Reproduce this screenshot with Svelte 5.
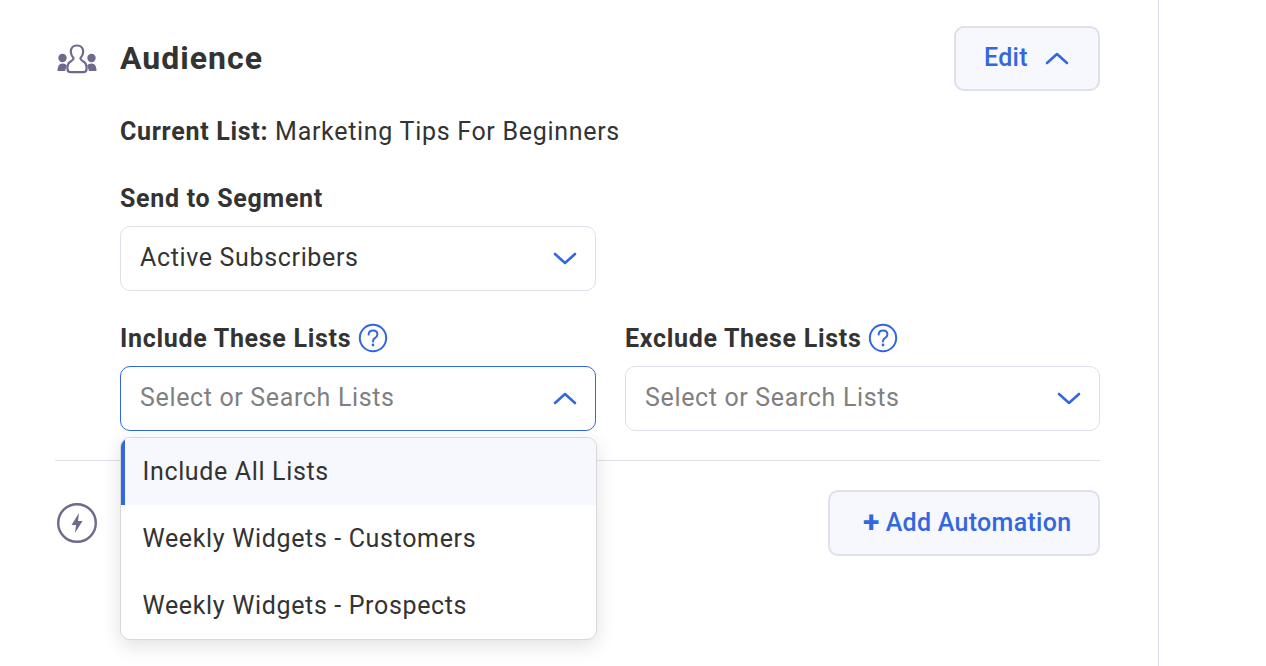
<script>
  const options = ["Include All Lists", "Weekly Widgets - Customers", "Weekly Widgets - Prospects"];
</script>

{#snippet chevron(up)}
  <svg class="chevron" width="24" height="14" viewBox="0 0 24 14" aria-hidden="true">
    <path d={up ? "M2 12 L12 3 L22 12" : "M2 3 L12 12 L22 3"} fill="none" stroke="#3367e0" stroke-width="2.6" stroke-linecap="round" stroke-linejoin="round" />
  </svg>
{/snippet}

{#snippet help()}
  <svg class="help" width="30" height="30" viewBox="0 0 30 30" aria-hidden="true">
    <circle cx="15" cy="15" r="13.2" fill="none" stroke="#3367e0" stroke-width="2" />
    <path d="M10.6 11.6 C10.8 8.9 12.7 7.6 15 7.6 C17.5 7.6 19.4 9.1 19.4 11.4 C19.4 13.3 18.2 14.2 16.8 15.2 C15.6 16 15 16.8 15 18.4" fill="none" stroke="#3367e0" stroke-width="2" stroke-linecap="round" />
    <circle cx="15" cy="22" r="1.4" fill="#3367e0" />
  </svg>
{/snippet}

<div class="page">
  <main class="panel">
    <section class="audience">
      <header class="section-head">
        <div class="section-title">
          <svg class="section-icon people" width="40" height="30" viewBox="0 0 40 30" aria-hidden="true">
            <g fill="#6d6a8d">
              <circle cx="5.5" cy="14" r="4.2" />
              <path d="M0.5 27 C0.5 22.5 2 19.5 5.5 19.5 C7.6 19.5 9 20.4 9.8 21.6 L8 27 Z" />
              <circle cx="34.5" cy="14" r="4.2" />
              <path d="M39.5 27 C39.5 22.5 38 19.5 34.5 19.5 C32.4 19.5 31 20.4 30.2 21.6 L32 27 Z" />
            </g>
            <path d="M20 1.5 C24 1.5 26.2 4.2 26.2 7.8 C26.2 10.6 24.6 12.8 23.4 14.2 C23.4 15.6 24.4 16.4 26 17.2 C28.2 18.3 29.6 20.5 29.6 24.5 C29.6 26.9 28.4 28.2 26.4 28.2 L13.6 28.2 C11.6 28.2 10.4 26.9 10.4 24.5 C10.4 20.5 11.8 18.3 14 17.2 C15.6 16.4 16.6 15.6 16.6 14.2 C15.4 12.8 13.8 10.6 13.8 7.8 C13.8 4.2 16 1.5 20 1.5 Z" fill="#fff" stroke="#6d6a8d" stroke-width="2.2" stroke-linejoin="round" />
          </svg>
          <h2>Audience</h2>
        </div>
        <button class="ghost edit">Edit {@render chevron(true)}</button>
      </header>

      <div class="section-body">
        <p class="current"><strong>Current List:</strong> Marketing Tips For Beginners</p>

        <div class="field segment">
          <span class="label">Send to Segment</span>
          <div class="select">
            <span>Active Subscribers</span>
            {@render chevron(false)}
          </div>
        </div>

        <div class="list-fields">
          <div class="field">
            <span class="label">Include These Lists {@render help()}</span>
            <div class="select open">
              <span class="placeholder">Select or Search Lists</span>
              {@render chevron(true)}
            </div>
            <ul class="menu">
              {#each options as option, i}
                <li class:active={i === 0}>{option}</li>
              {/each}
            </ul>
          </div>
          <div class="field">
            <span class="label">Exclude These Lists {@render help()}</span>
            <div class="select">
              <span class="placeholder">Select or Search Lists</span>
              {@render chevron(false)}
            </div>
          </div>
        </div>
      </div>
    </section>

    <section class="automation">
      <svg class="section-icon" width="42" height="42" viewBox="0 0 42 42" aria-hidden="true">
        <circle cx="21" cy="21" r="18.8" fill="none" stroke="#6d6a8d" stroke-width="2.4" />
        <path d="M23 11 L15.5 23 L20 23 L19 31 L26.5 19 L22 19 Z" fill="#6d6a8d" />
      </svg>
      <button class="ghost add"><b>+</b> Add Automation</button>
    </section>
  </main>
</div>

<style>
  :global(body) {
    margin: 0;
    background: #fff;
  }

  .page {
    height: 666px;
    overflow: hidden;
    font-family: Roboto, "Liberation Sans", sans-serif;
    font-size: 25px;
    letter-spacing: 0.65px;
    color: #333;
  }

  .panel {
    box-sizing: border-box;
    width: 1159px;
    height: 666px;
    padding: 26px 58px 0 55px;
    border-right: 1px solid #dfe0ea;
  }

  .audience {
    padding-bottom: 29px;
    border-bottom: 1px solid #dfe0ea;
  }

  .section-head {
    display: flex;
    align-items: center;
    justify-content: space-between;
  }

  .section-title {
    display: flex;
    align-items: center;
    gap: 23px;
  }

  .section-icon {
    flex: none;
  }

  .people {
    margin-left: 2px;
  }

  h2 {
    margin: 0 0 2px;
    font-size: 32px;
    font-weight: 700;
    letter-spacing: 1px;
  }

  .ghost {
    box-sizing: border-box;
    height: 65px;
    border: 2px solid #dfe0ea;
    border-radius: 10px;
    background: #f7f8fd;
    color: #3367e0;
    font: 500 25px Roboto, "Liberation Sans", sans-serif;
    letter-spacing: 0.3px;
    display: flex;
    align-items: center;
  }

  .edit {
    width: 146px;
    padding: 0 0 2px 28px;
    gap: 17px;
  }

  .section-body {
    padding-left: 65px;
  }

  .current {
    margin: 8px 0 18px;
    height: 66px;
    line-height: 66px;
    letter-spacing: 0.7px;
  }

  strong,
  .label {
    font-weight: 700;
  }

  .field {
    position: relative;
    display: flex;
    flex-direction: column;
    gap: 13px;
  }

  .segment {
    width: 476px;
    margin-bottom: 32px;
  }

  .label {
    display: flex;
    align-items: center;
    gap: 7px;
    height: 30px;
    white-space: nowrap;
    letter-spacing: 0.7px;
  }

  .help {
    flex: none;
  }

  .select {
    box-sizing: border-box;
    height: 65px;
    padding: 0 18px 2px 19px;
    display: flex;
    align-items: center;
    justify-content: space-between;
    border: 1px solid #dfe0ea;
    border-radius: 10px;
    background: #fff;
  }

  .select.open {
    border-color: #3367e0;
  }

  .placeholder {
    color: #808080;
  }

  .list-fields {
    display: grid;
    grid-template-columns: 476px 475px;
    gap: 29px;
  }

  .menu {
    position: absolute;
    z-index: 2;
    top: 114px;
    left: 0;
    width: 477px;
    box-sizing: border-box;
    margin: 0;
    padding: 0;
    list-style: none;
    background: #fff;
    border: 1px solid #d8d8d8;
    border-radius: 10px;
    overflow: hidden;
    box-shadow: 0 6px 20px rgba(0, 0, 0, 0.12);
  }

  .menu li {
    height: 67px;
    line-height: 67px;
    padding-left: 21.5px;
  }

  .menu li.active {
    background: #f7f8fd;
    box-shadow: inset 4px 0 0 #3367e0;
  }

  .automation {
    display: flex;
    align-items: center;
    justify-content: space-between;
    padding: 29px 0 0 1px;
  }

  .add {
    width: 272px;
    height: 66px;
    padding: 0 0 2px 33px;
    gap: 6px;
  }

  .add b {
    font-size: 30px;
    font-weight: 700;
    line-height: 1;
  }
</style>
